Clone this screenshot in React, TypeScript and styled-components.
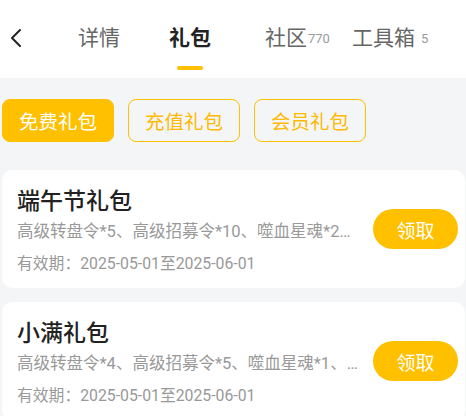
import React from "react";
import styled, { createGlobalStyle } from "styled-components";

const Global = createGlobalStyle`
  html, body { margin: 0; padding: 0; background: #F4F5F7; overflow: hidden; }
  body { font-family: Roboto, "Noto Sans CJK SC", sans-serif; }
  * { box-sizing: border-box; }
`;

const Page = styled.div`
  width: 466px;
  height: 416px;
  background: #F4F5F7;
  display: flex;
  flex-direction: column;
  overflow: hidden;
  & > * { flex-shrink: 0; }
`;

const Header = styled.div`
  height: 78px;
  background: #fff;
  display: flex;
  align-items: flex-start;
  padding-top: 22px;
  position: relative;
`;

const Back = styled.div`
  width: 78px;
  height: 32px;
  display: flex;
  align-items: center;
  padding-left: 9px;
`;

const Tabs = styled.div`
  display: flex;
  align-items: flex-start;
`;

const Tab = styled.div<{ $ml: number; $active?: boolean }>`
  position: relative;
  margin-left: ${(p) => p.$ml}px;
  height: 32px;
  line-height: 32px;
  font-size: 21px;
  font-weight: ${(p) => (p.$active ? 700 : 400)};
  color: ${(p) => (p.$active ? "#222" : "#666")};
  display: flex;
  flex-direction: column;
  align-items: center;
`;

const Badge = styled.span<{ $gap: number }>`
  position: absolute;
  left: 100%;
  top: 1px;
  margin-left: ${(p) => p.$gap}px;
  font-size: 13px;
  line-height: 32px;
  color: #9a9a9a;
  font-weight: 400;
`;

const Indicator = styled.div`
  position: absolute;
  top: 44px;
  width: 26px;
  height: 4px;
  border-radius: 2px;
  background: #FFC000;
`;

const Filters = styled.div`
  display: flex;
  gap: 14px;
  padding: 21px 0 0 2px;
`;

const Filter = styled.div<{ $active?: boolean }>`
  height: 43px;
  width: 112px;
  border-radius: 8px;
  border: 1px solid #FFC000;
  background: ${(p) => (p.$active ? "#FFC000" : "transparent")};
  color: ${(p) => (p.$active ? "#fff" : "#FFBA00")};
  font-size: 19.5px;
  display: flex;
  align-items: center;
  justify-content: center;
`;

const List = styled.div`
  display: flex;
  flex-direction: column;
  gap: 14px;
  padding: 28px 0 0 2px;
`;

const Card = styled.div`
  width: 463px;
  height: 118px;
  background: #fff;
  border-radius: 10px;
  display: flex;
  align-items: flex-start;
  padding: 17px 7px 0 15px;
`;

const Info = styled.div`
  flex: 1;
  min-width: 0;
  display: flex;
  flex-direction: column;
  padding-right: 14px;
`;

const Title = styled.div`
  font-size: 23px;
  line-height: 30px;
  font-weight: 500;
  color: #222;
`;

const Desc = styled.div`
  margin-top: 4px;
  font-size: 16.5px;
  line-height: 22px;
  color: #999;
  white-space: nowrap;
  overflow: hidden;
  text-overflow: ellipsis;
`;

const Valid = styled.div`
  margin-top: 10px;
  font-size: 15.8px;
  line-height: 22px;
  color: #999;
`;

const Claim = styled.div`
  flex: none;
  align-self: center;
  width: 85px;
  height: 40px;
  border-radius: 20px;
  background: #FFC000;
  color: #fff;
  font-size: 19px;
  display: flex;
  align-items: center;
  justify-content: center;
  margin-top: -17px;
`;

const gifts = [
  {
    title: "端午节礼包",
    desc: "高级转盘令*5、高级招募令*10、噬血星魂*20、金币*10000",
    valid: "有效期：2025-05-01至2025-06-01",
  },
  {
    title: "小满礼包",
    desc: "高级转盘令*4、高级招募令*5、噬血星魂*1、金币*5000",
    valid: "有效期：2025-05-01至2025-06-01",
  },
];

export default function App() {
  return (
    <Page>
      <Global />
      <Header>
        <Back>
          <svg width="14" height="20" viewBox="0 0 14 20">
            <path d="M11 2 L3 10 L11 18" fill="none" stroke="#222" strokeWidth="2" strokeLinecap="round" strokeLinejoin="round" />
          </svg>
        </Back>
        <Tabs>
          <Tab $ml={0}>详情</Tab>
          <Tab $ml={49} $active>
            礼包
            <Indicator />
          </Tab>
          <Tab $ml={54}>
            社区<Badge $gap={1}>770</Badge>
          </Tab>
          <Tab $ml={45}>
            工具箱<Badge $gap={6}>5</Badge>
          </Tab>
        </Tabs>
      </Header>
      <Filters>
        <Filter $active>免费礼包</Filter>
        <Filter>充值礼包</Filter>
        <Filter>会员礼包</Filter>
      </Filters>
      <List>
        {gifts.map((g) => (
          <Card key={g.title}>
            <Info>
              <Title>{g.title}</Title>
              <Desc>{g.desc}</Desc>
              <Valid>{g.valid}</Valid>
            </Info>
            <Claim>领取</Claim>
          </Card>
        ))}
      </List>
    </Page>
  );
}
